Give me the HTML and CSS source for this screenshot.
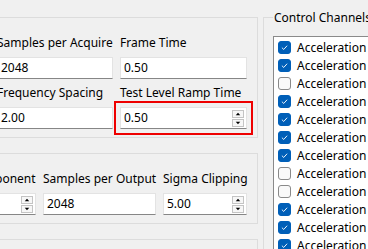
FILE: index.html
```html
<!DOCTYPE html>
<html lang="en">
<head>
  <meta charset="UTF-8">
  <title>Acquisition Settings</title>
  <link rel="stylesheet" href="styles.css">
</head>
<body>

  <div class="window">
    <div class="settings">

      <div class="group group-acquire">
        <div class="field">
          <span class="caption">Samples per Acquire</span>
          <div class="edit">2048</div>
        </div>
        <div class="field">
          <span class="caption">Frame Time</span>
          <div class="edit">0.50</div>
        </div>
        <div class="field">
          <span class="caption">Frequency Spacing</span>
          <div class="edit">2.00</div>
        </div>
        <div class="field">
          <span class="caption">Test Level Ramp Time</span>
          <div class="edit highlight">
            <span>0.50</span>
            <span class="spin">
              <span class="spin-btn"><svg viewBox="0 0 11 6"><path d="M3 4.5h5L5.5 1.5z"/></svg></span>
              <span class="spin-btn"><svg viewBox="0 0 11 6"><path d="M3 1.5h5L5.5 4.5z"/></svg></span>
            </span>
          </div>
        </div>
      </div>

      <div class="group group-output">
        <div class="field">
          <span class="caption">Exponent</span>
          <div class="edit">
            <span>1</span>
            <span class="spin">
              <span class="spin-btn"><svg viewBox="0 0 11 6"><path d="M3 4.5h5L5.5 1.5z"/></svg></span>
              <span class="spin-btn"><svg viewBox="0 0 11 6"><path d="M3 1.5h5L5.5 4.5z"/></svg></span>
            </span>
          </div>
        </div>
        <div class="field">
          <span class="caption">Samples per Output</span>
          <div class="edit">2048</div>
        </div>
        <div class="field">
          <span class="caption">Sigma Clipping</span>
          <div class="edit">
            <span>5.00</span>
            <span class="spin">
              <span class="spin-btn"><svg viewBox="0 0 11 6"><path d="M3 4.5h5L5.5 1.5z"/></svg></span>
              <span class="spin-btn"><svg viewBox="0 0 11 6"><path d="M3 1.5h5L5.5 4.5z"/></svg></span>
            </span>
          </div>
        </div>
      </div>

      <div class="group group-more"></div>
    </div>

    <fieldset class="channels">
      <legend>Control Channels</legend>
      <ul class="channel-list">
        <li><span class="check on"><svg viewBox="0 0 13 13"><path d="M3.4 6.7l2.2 2.1 4-4.4"/></svg></span>Acceleration</li>
        <li><span class="check on"><svg viewBox="0 0 13 13"><path d="M3.4 6.7l2.2 2.1 4-4.4"/></svg></span>Acceleration</li>
        <li><span class="check"></span>Acceleration</li>
        <li><span class="check on"><svg viewBox="0 0 13 13"><path d="M3.4 6.7l2.2 2.1 4-4.4"/></svg></span>Acceleration</li>
        <li><span class="check on"><svg viewBox="0 0 13 13"><path d="M3.4 6.7l2.2 2.1 4-4.4"/></svg></span>Acceleration</li>
        <li><span class="check on"><svg viewBox="0 0 13 13"><path d="M3.4 6.7l2.2 2.1 4-4.4"/></svg></span>Acceleration</li>
        <li><span class="check on"><svg viewBox="0 0 13 13"><path d="M3.4 6.7l2.2 2.1 4-4.4"/></svg></span>Acceleration</li>
        <li><span class="check"></span>Acceleration</li>
        <li><span class="check"></span>Acceleration</li>
        <li><span class="check on"><svg viewBox="0 0 13 13"><path d="M3.4 6.7l2.2 2.1 4-4.4"/></svg></span>Acceleration</li>
        <li><span class="check on"><svg viewBox="0 0 13 13"><path d="M3.4 6.7l2.2 2.1 4-4.4"/></svg></span>Acceleration</li>
        <li><span class="check on"><svg viewBox="0 0 13 13"><path d="M3.4 6.7l2.2 2.1 4-4.4"/></svg></span>Acceleration</li>
      </ul>
    </fieldset>
  </div>

</body>
</html>
```

FILE: styles.css
```css
body { margin: 0; background: #f0f0f0; }

.window {
  width: 368px;
  height: 249px;
  overflow: hidden;
  display: flex;
  align-items: flex-start;
  background: #f0f0f0;
  color: #000;
  font-family: "Noto Sans", "Liberation Sans", sans-serif;
  font-size: 12px;
}

/* left column of group boxes */
.settings {
  flex: none;
  width: 288px;
  margin-left: -30px;
  padding-top: 17px;
  display: flex;
  flex-direction: column;
  gap: 15px;
}

.group {
  border: 1px solid #dcdcdc;
  padding: 17px 10px 8px;
  display: grid;
  justify-content: end;
  column-gap: 7px;
  row-gap: 6px;
}
.group-acquire { grid-template-columns: 116px 127px; }
.group-output { grid-template-columns: 54px 113px 84px; }
.group-more { height: 40px; }

.field { display: flex; flex-direction: column; gap: 6px; }
.caption { line-height: 16px; white-space: nowrap; }

.edit {
  height: 22px;
  box-sizing: border-box;
  display: flex;
  align-items: center;
  justify-content: space-between;
  padding: 0 2px 1px 3px;
  background: #fff;
  border: 1px solid #e3e3e3;
  border-bottom-color: #868686;
}
.highlight { outline: 2px solid #ee0000; outline-offset: 4px; }

.spin { display: flex; flex-direction: column; gap: 1px; margin-top: 1px; }
.spin-btn {
  width: 12px;
  height: 8px;
  box-sizing: border-box;
  border: 1px solid #c4c4c4;
  background: #f7f7f7;
  display: flex;
}
.spin-btn svg { width: 10px; height: 6px; fill: #000; }

/* control channels group */
.channels {
  flex: none;
  width: 160px;
  margin: 9px 0 0 5px;
  padding: 10px 0 0 9px;
  border: 1px solid #dcdcdc;
  min-inline-size: 0;
}
.channels legend { padding: 0 1px; line-height: 17px; }

.channel-list {
  list-style: none;
  margin: 0;
  padding: 1px 0 0 4px;
  height: 240px;
  background: #fff;
  border: 1px solid #8a8a8a;
}
.channel-list li {
  height: 18px;
  display: flex;
  align-items: center;
  gap: 6px;
  white-space: nowrap;
}

.check {
  width: 13px;
  height: 13px;
  box-sizing: border-box;
  border: 1px solid #8a8a8a;
  border-radius: 3px;
  background: #f9f9f9;
  flex: none;
}
.check.on { background: #005fb8; border-color: #005fb8; }
.check svg {
  display: block;
  width: 11px;
  height: 11px;
  fill: none;
  stroke: #fff;
  stroke-width: 1.1;
}
```
